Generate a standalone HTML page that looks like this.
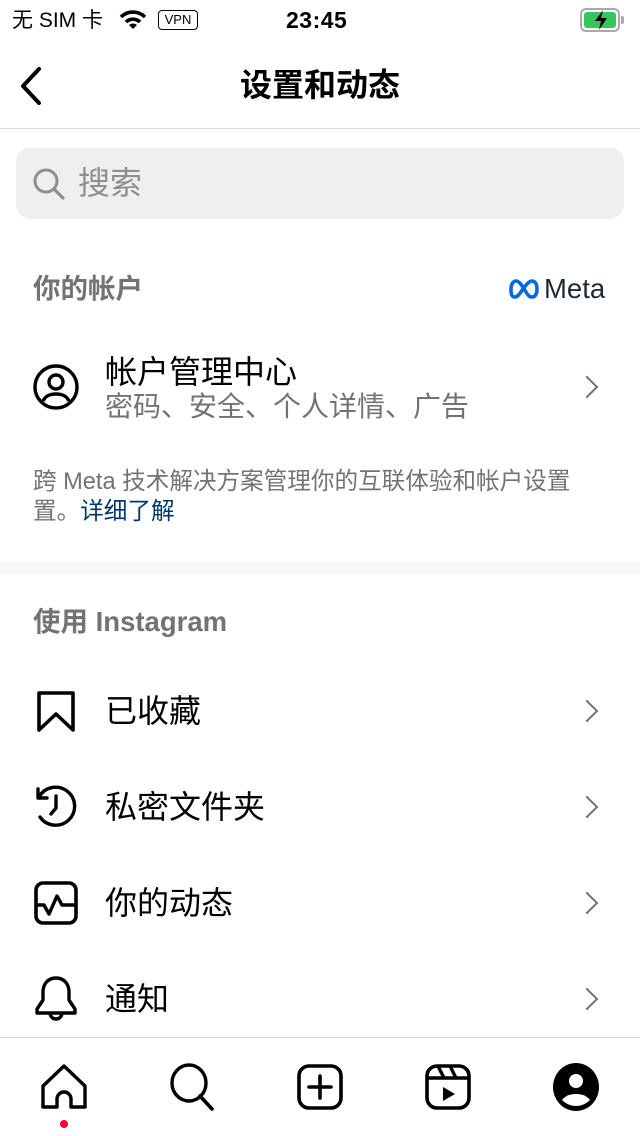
<!DOCTYPE html>
<html><head><meta charset="utf-8"><style>
*{margin:0;padding:0;box-sizing:border-box}
body{width:640px;height:1136px;overflow:hidden;background:#fff;font-family:"Liberation Sans","Noto Sans CJK SC",sans-serif;color:#000;position:relative}
.a{position:absolute;white-space:nowrap}
.chev{position:absolute;right:45px;width:16px;height:16px;border-right:2.5px solid #737373;border-top:2.5px solid #737373;transform:rotate(45deg)}
.row{position:absolute;left:105px;font-size:32px;line-height:40px}
.ic{position:absolute;left:34px}
</style></head><body>
<div class="a" style="left:12px;top:6px;font-size:21px;line-height:30px">无 SIM 卡</div>
<svg class="a" style="left:118px;top:9px" width="30" height="22" viewBox="0 0 30 22"><path d="M3 8a17 17 0 0 1 24 0" stroke="#000" stroke-width="3.6" fill="none"/><path d="M8 13a10 10 0 0 1 14 0" stroke="#000" stroke-width="3.6" fill="none"/><path d="M15 20l-4-4a6 6 0 0 1 8 0z" fill="#000"/></svg>
<div class="a" style="left:158px;top:10px;width:40px;height:20px;border:1.8px solid #000;border-radius:4px;font-size:13px;line-height:17px;text-align:center">VPN</div>
<div class="a" style="left:286px;top:5px;font-size:23px;font-weight:bold;line-height:30px;letter-spacing:0.5px">23:45</div>
<div class="a" style="left:580px;top:8px;width:40px;height:24px;border:2px solid #aaa;border-radius:6px;padding:2px"><div style="width:100%;height:100%;background:#34c759;border-radius:3px"></div></div>
<div class="a" style="left:621px;top:16px;width:3px;height:8px;background:#aaa;border-radius:0 2px 2px 0"></div>
<svg class="a" style="left:592px;top:9px" width="18" height="22" viewBox="0 0 18 22"><path d="M11 1L3 12h6l-2 9 8-12h-6z" fill="#000"/></svg>
<svg class="a" style="left:18px;top:66px" width="26" height="40" viewBox="0 0 26 40"><path d="M21 3L5 20l16 17" stroke="#000" stroke-width="4" fill="none" stroke-linecap="round" stroke-linejoin="round"/></svg>
<div class="a" style="left:0;width:640px;top:63px;text-align:center;font-size:32px;font-weight:bold;line-height:44px">设置和动态</div>
<div class="a" style="left:0;top:128px;width:640px;height:1px;background:#dbdbdb"></div>
<div class="a" style="left:16px;top:148px;width:608px;height:71px;background:#efeff0;border-radius:14px"></div>
<svg class="a" style="left:31px;top:166px" width="36" height="36" viewBox="0 0 36 36"><circle cx="15" cy="15" r="11" stroke="#8e8e8e" stroke-width="3" fill="none"/><path d="M23 23l9 9" stroke="#8e8e8e" stroke-width="3.2" stroke-linecap="round"/></svg>
<div class="a" style="left:78px;top:163px;font-size:32px;color:#8e8e8e;line-height:40px">搜索</div>
<div class="a" style="left:33px;top:271px;font-size:27.5px;color:#737373;font-weight:bold;line-height:36px">你的帐户</div>
<svg class="a" style="left:507px;top:278px" width="36" height="22" viewBox="0 0 36 22"><path d="M4 11c0-6 3-8 5-8 4 0 8 8 10 11s3 5 6 5 5-3 5-8-2-8-5-8c-3 0-6 4-9 8s-5 8-8 8-4-2-4-8z" stroke="#0668e1" stroke-width="3.6" fill="none"/></svg>
<div class="a" style="left:544px;top:271px;font-size:27.5px;color:#1c2b33;line-height:36px">Meta</div>
<svg class="a" style="left:32px;top:363px" width="48" height="48" viewBox="0 0 48 48"><circle cx="24" cy="24" r="21" stroke="#000" stroke-width="3.4" fill="none"/><circle cx="24" cy="19" r="7" stroke="#000" stroke-width="3.4" fill="none"/><path d="M11 38c3-6 8-7 13-7s10 1 13 7" stroke="#000" stroke-width="3.4" fill="none"/></svg>
<div class="a" style="left:105px;top:352px;font-size:32px;line-height:40px">帐户管理中心</div>
<div class="a" style="left:105px;top:389px;font-size:28px;color:#737373;line-height:36px">密码、安全、个人详情、广告</div>
<div class="chev" style="top:379px"></div>
<div class="a" style="left:33px;top:467px;font-size:23.6px;color:#737373;line-height:30px">跨 Meta 技术解决方案管理你的互联体验和帐户设置</div>
<div class="a" style="left:33px;top:497px;font-size:23.6px;color:#737373;line-height:30px">置。<span style="color:#00376b">详细了解</span></div>
<div class="a" style="left:0;top:561px;width:640px;height:14px;background:#f8f8f8"></div>
<div class="a" style="left:33px;top:604px;font-size:27.5px;color:#737373;font-weight:bold;line-height:36px">使用 Instagram</div>

<svg class="ic" style="top:690px" width="44" height="44" viewBox="0 0 44 44"><path d="M5 3h34v37L22 24 5 40z" stroke="#000" stroke-width="3.6" fill="none" stroke-linejoin="round"/></svg>
<div class="row" style="top:691px">已收藏</div><div class="chev" style="top:703px"></div>

<svg class="ic" style="top:784px" width="44" height="48" viewBox="0 0 44 48"><path d="M4 5v9h9" stroke="#000" stroke-width="3.4" fill="none" stroke-linecap="round" stroke-linejoin="round"/><path d="M5 13A19 19 0 1 1 6 33" stroke="#000" stroke-width="3.4" fill="none" stroke-linecap="round"/><path d="M22 12v12l-5 6" stroke="#000" stroke-width="3.4" fill="none" stroke-linecap="round"/></svg>
<div class="row" style="top:787px">私密文件夹</div><div class="chev" style="top:799px"></div>

<svg class="ic" style="top:881px" width="44" height="44" viewBox="0 0 44 44"><rect x="2" y="2" width="40" height="40" rx="7" stroke="#000" stroke-width="3.6" fill="none"/><path d="M2 24h8l5 9 8-18 5 9h14" stroke="#000" stroke-width="3.4" fill="none" stroke-linejoin="round"/></svg>
<div class="row" style="top:883px">你的动态</div><div class="chev" style="top:895px"></div>

<svg class="ic" style="top:975px" width="44" height="48" viewBox="0 0 44 48"><path d="M22 3c-8 0-13 6-13 14v8l-6 9v4h38v-4l-6-9v-8c0-8-5-14-13-14z" stroke="#000" stroke-width="3.4" fill="none" stroke-linejoin="round"/><path d="M16 38a6 6 0 0 0 12 0" stroke="#000" stroke-width="3.4" fill="none"/></svg>
<div class="row" style="top:979px">通知</div><div class="chev" style="top:991px"></div>

<div class="a" style="left:0;top:1037px;width:640px;height:1px;background:#dbdbdb"></div>
<svg class="a" style="left:40px;top:1063px" width="48" height="48" viewBox="0 0 48 48"><path d="M3 44V23L24 3l21 20v21H31V36a7 7 0 0 0-14 0v8z" stroke="#000" stroke-width="3.4" fill="none" stroke-linejoin="round"/></svg>
<div class="a" style="left:60px;top:1120px;width:8px;height:8px;border-radius:50%;background:#ff0034"></div>
<svg class="a" style="left:168px;top:1063px" width="50" height="50" viewBox="0 0 50 50"><ellipse cx="21" cy="20" rx="17" ry="18" stroke="#000" stroke-width="3.4" fill="none"/><path d="M32 33l12 13" stroke="#000" stroke-width="3.6" stroke-linecap="round"/></svg>
<svg class="a" style="left:296px;top:1063px" width="48" height="48" viewBox="0 0 48 48"><rect x="3" y="3" width="42" height="42" rx="10" stroke="#000" stroke-width="3.6" fill="none"/><path d="M24 13v22M13 24h22" stroke="#000" stroke-width="3.6" stroke-linecap="round"/></svg>
<svg class="a" style="left:424px;top:1063px" width="48" height="48" viewBox="0 0 48 48"><rect x="3" y="3" width="42" height="42" rx="10" stroke="#000" stroke-width="3.6" fill="none"/><path d="M3 15h42M14 3l6 12M26 3l6 12" stroke="#000" stroke-width="3.4"/><path d="M19 24v14l12-7z" fill="#000"/></svg>
<svg class="a" style="left:552px;top:1062px" width="48" height="50" viewBox="0 0 48 50"><ellipse cx="24" cy="25" rx="23" ry="24" fill="#000"/><circle cx="24" cy="19" r="7" fill="#fff"/><path d="M10 38c4-5 9-6 14-6s10 1 14 6c-4 4-9 6-14 6s-10-2-14-6z" fill="#fff"/></svg>
</body></html>
